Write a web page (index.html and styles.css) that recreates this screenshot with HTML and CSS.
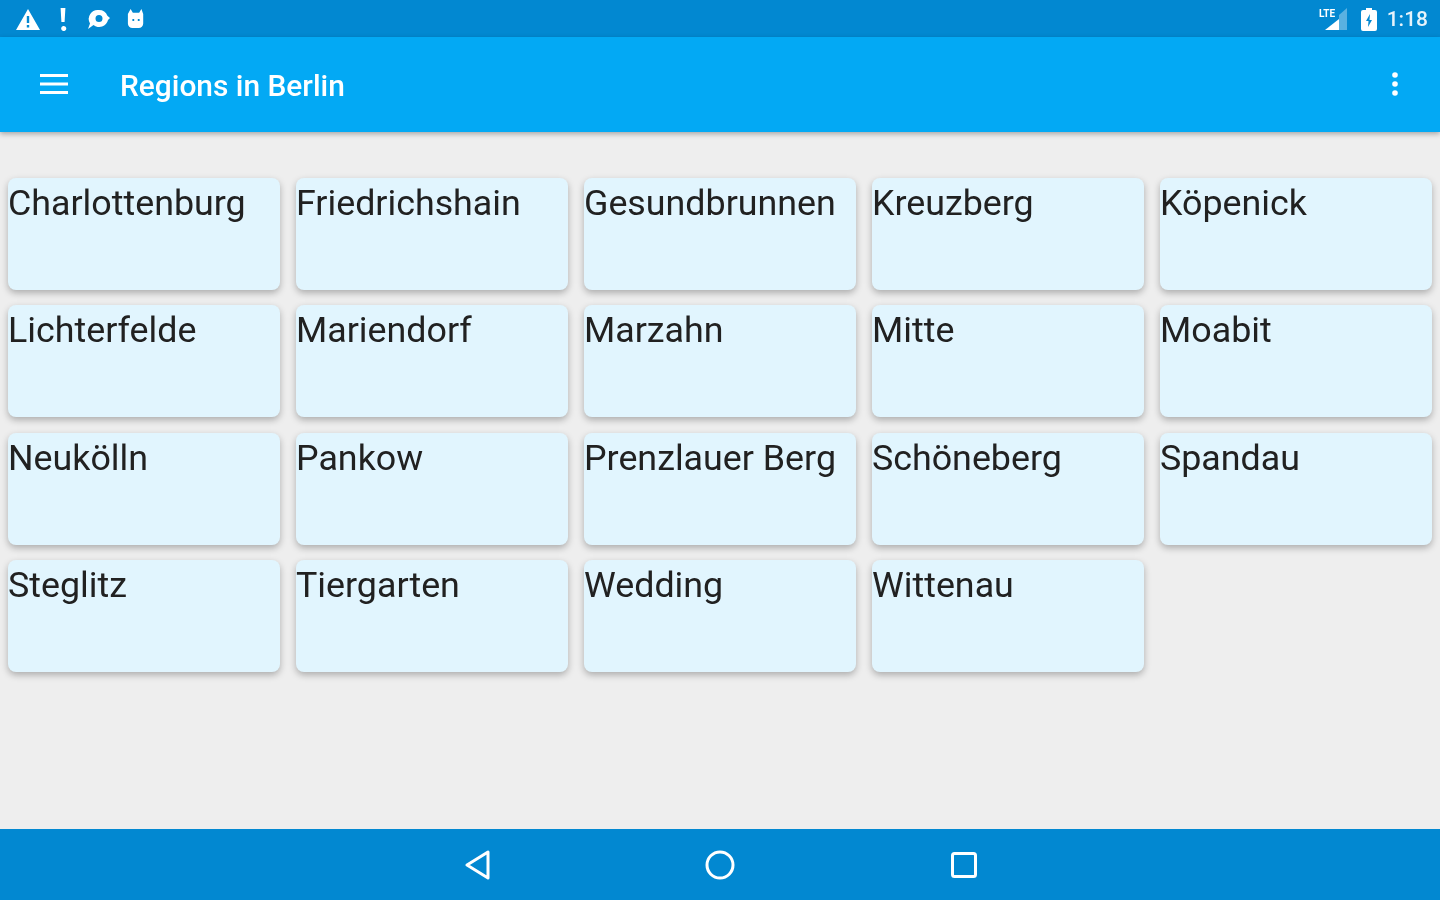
FILE: index.html
```html
<!DOCTYPE html>
<html lang="en">
<head>
   <title>Regions in Berlin</title>
   <link rel="stylesheet" href="styles.css">
</head>
<body>

   <!-- Status bar -->
   <div class="status-bar">
      <div class="status-left">
         <svg width="26" height="24" viewBox="0 0 26 24"><path fill="#fff" fill-rule="evenodd" d="M13 2 25 23H1ZM11.800 9v7h2.400V9ZM11.800 18v2.600h2.400V18Z"/></svg>
         <svg class="bang" width="10" height="24" viewBox="0 0 10 24"><path fill="#fff" d="M2.600 1h4.800L6.600 15H3.400ZM5 19a2.600 2.600 0 1 1 0 5 2.600 2.600 0 0 1 0-5Z"/></svg>
         <svg class="chat" width="26" height="24" viewBox="0 0 26 24"><path fill="#fff" fill-rule="evenodd" d="M14 3a9 9 0 0 1 8.400 5.800L25 11l-2 2a9 9 0 0 1-14.500 5L3 22l2-5.500A9 9 0 0 1 14 3ZM14 8a3.500 3.500 0 1 0 0 7 3.500 3.500 0 0 0 0-7Z"/></svg>
         <svg class="cat" width="20" height="24" viewBox="0 0 20 24"><path fill="#fff" fill-rule="evenodd" d="M4 1 6.500 5h7L16 1l2 5.500V17a5 5 0 0 1-5 5H6a5 5 0 0 1-5-5V6.500ZM6 12v2.200h2V12ZM12 12v2.200h2V12Z"/></svg>
      </div>
      <div class="status-right">
         <svg width="30" height="26" viewBox="0 0 30 26"><path fill="#fff" opacity=".35" d="M28 2v22H20V9Z"/><path fill="#fff" d="M20 13v11H6Z"/><text x="0" y="11" class="lte">LTE</text></svg>
         <svg class="battery" width="18" height="24" viewBox="0 0 18 24"><path fill="#fff" fill-rule="evenodd" d="M6 1h6v2h3a2 2 0 0 1 2 2v17a2 2 0 0 1-2 2H3a2 2 0 0 1-2-2V5a2 2 0 0 1 2-2h3ZM10 7 6 14h2.500L8 20l4-7H9.500Z"/></svg>
         <span class="clock">1:18</span>
      </div>
   </div>

   <!-- App bar -->
   <div class="app-bar">
      <svg class="menu-icon" width="30" height="22" viewBox="0 0 30 22"><path fill="#fff" d="M1 1h28v3H1ZM1 9.500h28v3H1ZM1 18h28v3H1Z"/></svg>
      <span class="title">Regions in Berlin</span>
      <svg class="more-icon" width="8" height="26" viewBox="0 0 8 26"><circle fill="#fff" cx="4" cy="4" r="2.800"/><circle fill="#fff" cx="4" cy="13" r="2.800"/><circle fill="#fff" cx="4" cy="22" r="2.800"/></svg>
   </div>

   <!-- Region cards -->
   <div class="content">
      <div class="grid">
         <div class="card">Charlottenburg</div>
         <div class="card">Friedrichshain</div>
         <div class="card">Gesundbrunnen</div>
         <div class="card">Kreuzberg</div>
         <div class="card">Köpenick</div>
         <div class="card">Lichterfelde</div>
         <div class="card">Mariendorf</div>
         <div class="card">Marzahn</div>
         <div class="card">Mitte</div>
         <div class="card">Moabit</div>
         <div class="card">Neukölln</div>
         <div class="card">Pankow</div>
         <div class="card">Prenzlauer Berg</div>
         <div class="card">Schöneberg</div>
         <div class="card">Spandau</div>
         <div class="card">Steglitz</div>
         <div class="card">Tiergarten</div>
         <div class="card">Wedding</div>
         <div class="card">Wittenau</div>
      </div>
   </div>

   <!-- Navigation bar -->
   <div class="nav-bar">
      <svg class="back-icon" width="28" height="32" viewBox="0 0 28 32"><path fill="none" stroke="#fff" stroke-width="3" stroke-linejoin="round" d="M24 3v26L3 16Z"/></svg>
      <svg width="32" height="32" viewBox="0 0 32 32"><circle fill="none" stroke="#fff" stroke-width="3" cx="16" cy="16" r="13"/></svg>
      <svg width="28" height="28" viewBox="0 0 28 28"><rect fill="none" stroke="#fff" stroke-width="3" x="2.500" y="2.500" width="23" height="23" rx="2"/></svg>
   </div>

</body>
</html>
```

FILE: styles.css
```css
* {
   margin: 0;
   padding: 0;
   box-sizing: border-box;
   font-family: Roboto, sans-serif;
}

body {
   width: 1440px;
   height: 900px;
   display: flex;
   flex-direction: column;
   background: #eeeeee;
   overflow: hidden;
}

/* The reference is a soft, upscaled capture */
.status-left, .status-right, .app-bar, .card, .nav-bar svg {
   filter: blur(0.6px);
}

/* Status bar */
.status-bar {
   height: 37px;
   flex-shrink: 0;
   display: flex;
   justify-content: space-between;
   align-items: center;
   padding: 0 12px 0 15px;
   background: #0288d1;
}

.status-left, .status-right {
   display: flex;
   align-items: center;
}

.status-left svg {
   margin-right: 17px;
}

.status-left .chat {
   margin-right: 16px;
}

.status-left .cat {
   width: 18px;
}

.status-right .battery {
   margin: 0 9px 0 11px;
}

.lte {
   font-size: 10px;
   font-weight: 700;
   fill: #fff;
}

.clock {
   color: #ffffff;
   font-size: 21px;
   font-weight: 500;
   opacity: 0.9;
}

/* App bar */
.app-bar {
   height: 95px;
   flex-shrink: 0;
   display: flex;
   align-items: center;
   padding: 0 41px 0 39px;
   background: #03a9f4;
   box-shadow: 0 2px 5px rgba(0, 0, 0, 0.3);
   position: relative;
}

.menu-icon {
   margin-right: 51px;
   margin-top: -2px;
}

.title {
   flex: 1;
   margin-top: 2px;
   color: #ffffff;
   font-size: 29.900px;
   font-weight: 500;
}

.more-icon {
   margin-top: -2px;
}

/* Region cards */
.content {
   flex: 1;
   padding: 46px 8px 0;
}

.grid {
   display: grid;
   grid-template-columns: repeat(5, 272px);
   grid-auto-rows: 112px;
   column-gap: 16px;
   row-gap: 15.300px;
}

.card {
   padding: 4px 0;
   background: #e1f5fe;
   border-radius: 8px;
   box-shadow: 0 3px 7px rgba(0, 0, 0, 0.28);
   color: #212121;
   font-size: 35.800px;
   line-height: 42px;
}

/* Navigation bar */
.nav-bar {
   height: 71px;
   flex-shrink: 0;
   display: flex;
   justify-content: center;
   align-items: center;
   gap: 214px;
   background: #0288d1;
}

.back-icon {
   margin-left: 2px;
   margin-right: -2px;
}
```
